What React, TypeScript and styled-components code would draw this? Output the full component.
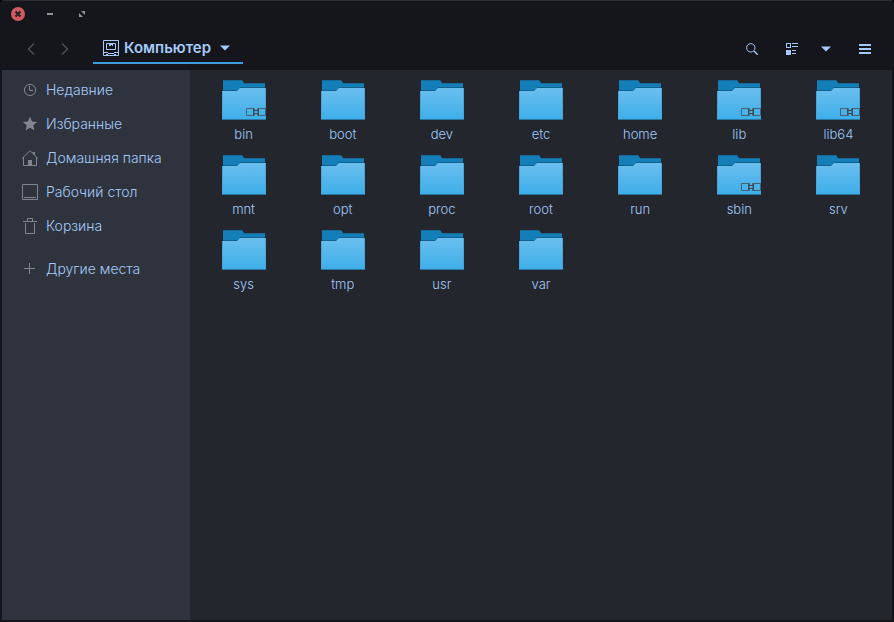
import React from "react";
import styled, { createGlobalStyle } from "styled-components";

const GlobalStyle = createGlobalStyle`
  * { box-sizing: border-box; }
  body { margin: 0; background: #000; }
  button { font: inherit; color: inherit; background: none; border: 0; padding: 0; cursor: pointer; }
  svg { display: block; flex: none; }
`;

const Window = styled.div`
  min-height: 100vh;
  display: flex;
  flex-direction: column;
  background: #15161b;
  border: 2px solid #15161b;
  border-top: 1px solid #2c2d31;
  border-radius: 4px 4px 0 0;
  color: #a5cafa;
  font: 300 14px/18px Inter, "Noto Sans", sans-serif;
`;

const TitleBar = styled.header`
  height: 26px;
  display: flex;
  align-items: center;
`;

const WindowButton = styled.button`
  width: 32px;
  height: 26px;
  display: grid;
  place-items: center;
  color: #8f959c;
`;

const Toolbar = styled.div`
  height: 43px;
  display: flex;
  align-items: flex-start;
  padding: 0 9px 0 12px;
`;

const ToolButton = styled.button<{ $width: number; $dim?: boolean }>`
  width: ${(p) => p.$width}px;
  height: 43px;
  display: grid;
  place-items: center;
  color: ${(p) => (p.$dim ? "#50535a" : "#a5cafa")};
`;

const LocationButton = styled.button`
  width: 150px;
  height: 37px;
  margin-left: 12px;
  padding: 6px 13px 0 10px;
  display: flex;
  align-items: center;
  gap: 5px;
  border-bottom: 2px solid #3b9ce0;
  font-size: 15px;
  font-weight: 600;
`;

const LocationName = styled.span`
  flex: 1;
  text-align: left;
`;

const Tools = styled.div`
  display: flex;
  gap: 6px;
  margin-left: auto;
`;

const Body = styled.div`
  flex: 1;
  display: flex;
`;

const Sidebar = styled.nav`
  width: 188px;
  flex: none;
  padding-top: 3px;
  background: #2f333d;
`;

const Place = styled.a<{ $spaced?: boolean }>`
  height: 34px;
  margin-top: ${(p) => (p.$spaced ? 9 : 0)}px;
  padding-left: 20px;
  display: flex;
  align-items: center;
  gap: 8px;
  color: inherit;
  text-decoration: none;
  white-space: nowrap;

  svg { color: #82868f; }
`;

const Files = styled.main`
  flex: 1;
  min-width: 0;
  background: #23262d;
  padding: 10px 4px;
  display: grid;
  grid-template-columns: repeat(auto-fill, minmax(90px, 1fr));
  grid-auto-rows: 75px;
  align-content: start;
`;

const FileItem = styled.button`
  display: flex;
  flex-direction: column;
  align-items: center;
  gap: 5px;
`;

function PlaceIcon({ kind }: { kind: string }) {
  return (
    <svg width="16" height="16" viewBox="0 0 16 16" fill="none" stroke="currentColor" aria-hidden="true">
      {kind === "recent" && <><circle cx="8" cy="8" r="5.6" /><path d="M7.5 4v4.5H11" /></>}
      {kind === "star" && <path d="M8 .8l2.100 4.600 5 .5-3.800 3.400 1.100 5L8 11.800l-4.400 2.500 1.100-5L.9 5.900l5-.5z" fill="currentColor" stroke="none" />}
      {kind === "home" && <><path d="M1.5 7v8.5h13V7M.2 8.3 8 .7l7.8 7.6M10.5 2.5h2V5" /><path d="M6 10h4v6H6zM10.5 2.5h2.5v3z" fill="currentColor" stroke="none" /></>}
      {kind === "desktop" && <><path d="M.5.5h15v15H.5z" /><path d="M2 13.5h12" /></>}
      {kind === "trash" && <path d="M3.500 5v10.500h9V5M1 3.500h14M5.500 3V.5h5V3" />}
      {kind === "plus" && <path d="M7.500 2v11M2 7.500h11" />}
    </svg>
  );
}

const Caret = () => (
  <svg width="10" height="6" viewBox="0 0 10 6" aria-hidden="true">
    <path d="M0 .5h10L5 5.5z" fill="currentColor" />
  </svg>
);

const DiskIcon = () => (
  <svg width="16" height="16" viewBox="0 0 16 16" fill="none" stroke="currentColor" aria-hidden="true">
    <path d="M.5.5h15v15H.5z" />
    <path d="M3.5 3.5h9v6h-9z" />
    <path d="M6 3h4v3H9V5H8v1H6zM1 12h4v1H1zM11 12h4v1h-4zM5 13h6v1H5zM3 14h2v1H3zM11 14h2v1h-2z" fill="currentColor" stroke="none" />
  </svg>
);

function Folder({ linked }: { linked?: boolean }) {
  return (
    <svg width="44" height="40" viewBox="0 0 44 40" aria-hidden="true">
      <defs>
        <linearGradient id="folderFront" x1="0" y1="0" x2="0" y2="1">
          <stop offset="0" stopColor="#6bbfef" />
          <stop offset="1" stopColor="#3daee9" />
        </linearGradient>
      </defs>
      <path d="M1 0h19l2 3h21v12H1z" fill="#147eb8" />
      <path d="M1 0h19v1H1zM22 3h21v1H22z" fill="#176a98" />
      <path d="M1 10h15l2-3h25v1H18l-2 3H1z" fill="#10618e" />
      <path d="M0 11h15l3-3h26v32H0z" fill="url(#folderFront)" />
      <path d="M0 39h44v1H0z" fill="#2877a0" />
      <path d="M0 11h1v28H0zM43 8h1v31h-1z" fill="#4aa5d8" />
      {linked && (
        <g fill="none" stroke="#47606f">
          <path d="M32.500 30v-1.500h-8v7h8V34M35.500 30v-1.500h8v7h-8V34" />
          <path d="M32 30.500h4v3h-4zM31.500 29v6M36.500 29v6" stroke="#3e4b56" />
        </g>
      )}
    </svg>
  );
}

const FileName = styled.span`
  font-size: 13px;
`;

const places = [
  { kind: "recent", name: "Недавние" },
  { kind: "star", name: "Избранные" },
  { kind: "home", name: "Домашняя папка" },
  { kind: "desktop", name: "Рабочий стол" },
  { kind: "trash", name: "Корзина" },
  { kind: "plus", name: "Другие места", spaced: true },
];

const folders = ["bin", "boot", "dev", "etc", "home", "lib", "lib64", "mnt", "opt", "proc", "root", "run", "sbin", "srv", "sys", "tmp", "usr", "var"];
const links = new Set(["bin", "lib", "lib64", "sbin"]);

export default function App() {
  return (
    <>
      <GlobalStyle />
      <Window>
        <TitleBar>
          <WindowButton aria-label="Закрыть">
            <svg width="14" height="14" viewBox="0 0 14 14">
              <circle cx="7" cy="7" r="7" fill="#d15a60" />
              <path d="M4.500 4.500l5 5M9.500 4.500l-5 5" stroke="#202027" strokeWidth="2" />
            </svg>
          </WindowButton>
          <WindowButton aria-label="Свернуть">
            <svg width="6" height="2" viewBox="0 0 6 2"><path d="M0 0h6v2H0z" fill="currentColor" /></svg>
          </WindowButton>
          <WindowButton aria-label="Развернуть">
            <svg width="6" height="6" viewBox="0 0 6 6"><path d="M2 0h4v4zM0 2v4h4z" fill="currentColor" /></svg>
          </WindowButton>
        </TitleBar>
        <Toolbar>
          <ToolButton $width={34} $dim aria-label="Назад">
            <svg width="8" height="12" viewBox="0 0 8 12" fill="none" stroke="currentColor" strokeWidth="1.300"><path d="M7 .5 1.500 6 7 11.500" /></svg>
          </ToolButton>
          <ToolButton $width={33} $dim aria-label="Вперёд">
            <svg width="8" height="12" viewBox="0 0 8 12" fill="none" stroke="currentColor" strokeWidth="1.300"><path d="M1 .5 6.500 6 1 11.500" /></svg>
          </ToolButton>
          <LocationButton>
            <DiskIcon />
            <LocationName>Компьютер</LocationName>
            <Caret />
          </LocationButton>
          <Tools>
            <ToolButton $width={42} aria-label="Поиск">
              <svg width="12" height="12" viewBox="0 0 12 12" fill="none" stroke="currentColor"><circle cx="4.800" cy="4.800" r="4.200" /><path d="m8 8 3.700 3.700" strokeWidth="1.400" /></svg>
            </ToolButton>
            <ToolButton $width={26} aria-label="Вид">
              <svg width="12" height="12" viewBox="0 0 12 12" fill="currentColor"><path d="M0 0h5v5H0zM1 1v3h3V1zM0 7h5v5H0zM6 0h6v1H6zM6 3h6v1H6zM6 7h4v1H6zM6 10h4v1H6z" fillRule="evenodd" /></svg>
            </ToolButton>
            <ToolButton $width={30} aria-label="Параметры вида"><Caret /></ToolButton>
            <ToolButton $width={36} aria-label="Меню">
              <svg width="12" height="10" viewBox="0 0 12 10" fill="currentColor"><path d="M0 0h12v2H0zM0 4h12v2H0zM0 8h12v2H0z" /></svg>
            </ToolButton>
          </Tools>
        </Toolbar>
        <Body>
          <Sidebar>
            {places.map((p) => (
              <Place key={p.kind} href="#" $spaced={p.spaced}>
                <PlaceIcon kind={p.kind} />
                {p.name}
              </Place>
            ))}
          </Sidebar>
          <Files>
            {folders.map((name) => (
              <FileItem key={name}>
                <Folder linked={links.has(name)} />
                <FileName>{name}</FileName>
              </FileItem>
            ))}
          </Files>
        </Body>
      </Window>
    </>
  );
}
